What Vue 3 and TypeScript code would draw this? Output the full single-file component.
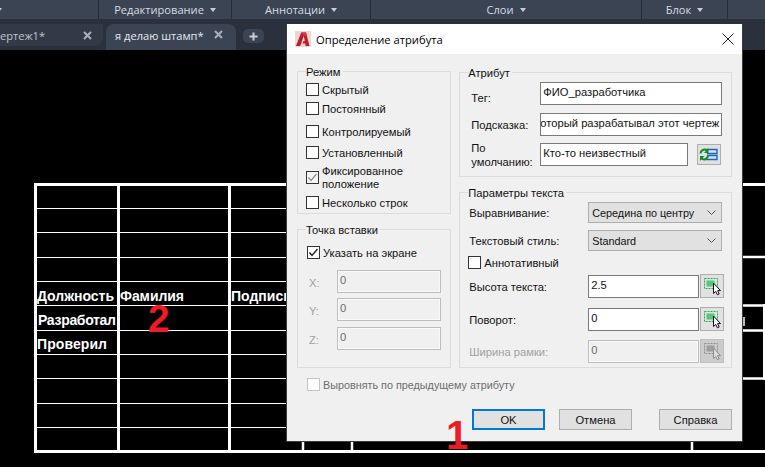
<template>
  <div class="page">
    <div class="ribbon">
      <div v-for="s in sections" :key="s.name" class="section" :style="{ width: s.width + 'px' }">
        <span>{{ s.name }}</span>
        <i v-if="s.name" class="caret"></i>
      </div>
      <div class="section first-caret"><i class="caret"></i></div>
    </div>

    <div class="tabs">
      <div class="tab idle">
        <span class="tab-name">ертеж1*</span>
        <svg class="tab-x" width="9" height="9" viewBox="0 0 9 9"><path d="M1 1l7 7M8 1l-7 7" /></svg>
      </div>
      <div class="tab active">
        <span class="tab-name">я делаю штамп*</span>
        <svg class="tab-x" width="9" height="9" viewBox="0 0 9 9"><path d="M1 1l7 7M8 1l-7 7" /></svg>
      </div>
      <div class="tab plus">
        <svg width="9" height="9" viewBox="0 0 9 9"><path d="M4.5 0.5v8M0.5 4.5h8" /></svg>
      </div>
    </div>

    <div class="canvas">
      <svg class="drawing" width="765" height="417" viewBox="0 50 765 417">
        <g stroke="#fff" fill="none">
          <path v-for="y in thinRows" :key="y" :d="`M34 ${y + 0.5}H742`" stroke-width="1" />
          <path d="M35.5 183V453M118.5 185V452M229.5 185V452" stroke-width="3" />
          <path d="M303 185V452M352 185V452M692 185V452" stroke-width="2.5" />
          <path d="M34 184.5H765M34 451.5H765" stroke-width="3" />
          <path d="M742 257H765M742 305.5H765M742 330.5H765M742 378.5H765" stroke-width="2.5" />
          <path d="M764 304V380" stroke-width="2" />
          <path d="M744 317V326" stroke="#bbb" stroke-width="2" />
        </g>
        <g class="cad-text" fill="#fff">
          <text x="37" y="301" textLength="77">Должность</text>
          <text x="120" y="301" textLength="64">Фамилия</text>
          <text x="231" y="301">Подпись</text>
          <text x="38" y="325" textLength="78">Разработал</text>
          <text x="37" y="349" textLength="70">Проверил</text>
        </g>
      </svg>
      <span class="mark mark-two">2</span>
      <span class="mark mark-one">1</span>

      <div class="dialog">
        <div class="title">
          <svg class="logo" width="16" height="16" viewBox="0 0 16 16">
            <rect width="16" height="16" fill="#f1d5d3" />
            <path d="M1 15 6.2 1.5H11L14.5 15H10.6L10.2 12.6H7.4L8.6 10H9.8L8.8 5 5.2 15Z" fill="#b5202c" />
            <path d="M6.2 1.5H11L11.8 5H8.8Z" fill="#d5333d" />
          </svg>
          <span class="title-text">Определение атрибута</span>
          <svg class="close" width="12" height="12" viewBox="0 0 12 12"><path d="M0.5 0.5l11 11M11.5 0.5l-11 11" /></svg>
        </div>

        <div class="body">
          <div class="columns">
            <div class="col left">
              <div class="group mode">
                <span class="legend">Режим</span>
                <label v-for="m in modes" :key="m.text" class="check" :style="{ marginTop: m.gap + 'px' }">
                  <span class="box" :class="{ muted: m.on }">
                    <svg v-if="m.on" width="11" height="11" viewBox="0 0 11 11"><path d="M1.5 5.5 4 8.5 9.5 2" /></svg>
                  </span>
                  <span class="check-text">{{ m.text }}</span>
                </label>
              </div>

              <div class="group point">
                <span class="legend">Точка вставки</span>
                <label class="check">
                  <span class="box dark">
                    <svg width="11" height="11" viewBox="0 0 11 11"><path d="M1.5 5.5 4 8.5 9.5 2" /></svg>
                  </span>
                  <span class="check-text">Указать на экране</span>
                </label>
                <div v-for="c in coords" :key="c.name" class="coord" :style="{ marginTop: c.gap + 'px' }">
                  <span class="coord-name">{{ c.name }}:</span>
                  <div class="field off coord-field">0</div>
                </div>
              </div>
            </div>

            <div class="col right">
              <div class="group attr">
                <span class="legend">Атрибут</span>
                <div class="attr-row">
                  <span class="attr-label low">Тег:</span>
                  <div class="field wide">ФИО_разработчика</div>
                </div>
                <div class="attr-row gap8">
                  <span class="attr-label">Подсказка:</span>
                  <div class="field wide clipped"><span>который разрабатывал этот чертеж</span></div>
                </div>
                <div class="attr-row gap7">
                  <span class="attr-label two">По<br />умолчанию:</span>
                  <div class="field short">Кто-то неизвестный</div>
                  <button class="tool refresh">
                    <svg width="20" height="15" viewBox="0 0 20 15">
                      <path d="M7 2.5H18V6.5H8M8 8.5H18V12.5H7" fill="none" stroke="#1668c4" stroke-width="1.4" />
                      <path d="M1.5 6.5A4 4 0 0 1 8 3.5M9 8.5A4 4 0 0 1 2.5 11.5" fill="none" stroke="#0c8f22" stroke-width="2" />
                      <path d="M9.5 1V6H5ZM1 14V9H5.5Z" fill="#0c8f22" />
                    </svg>
                  </button>
                </div>
              </div>

              <div class="group text-params">
                <span class="legend">Параметры текста</span>
                <div class="param">
                  <span class="param-label">Выравнивание:</span>
                  <div class="select">
                    <span>Середина по центру</span>
                    <svg width="9" height="5" viewBox="0 0 9 5"><path d="M0.5 0.5 4.5 4.5 8.5 0.5" /></svg>
                  </div>
                </div>
                <div class="param gap7">
                  <span class="param-label">Текстовый стиль:</span>
                  <div class="select">
                    <span>Standard</span>
                    <svg width="9" height="5" viewBox="0 0 9 5"><path d="M0.5 0.5 4.5 4.5 8.5 0.5" /></svg>
                  </div>
                </div>
                <label class="check annot">
                  <span class="box"></span>
                  <span class="check-text">Аннотативный</span>
                </label>
                <div v-for="p in picks" :key="p.label" class="param" :style="{ marginTop: p.gap + 'px' }">
                  <span class="param-label pick-label" :class="{ faded: p.off }">{{ p.label }}</span>
                  <div class="field pick-field" :class="{ off: p.off }">{{ p.value }}</div>
                  <button class="tool pick" :class="{ disabled: p.off }">
                    <svg width="22" height="22" viewBox="0 0 22 22">
                      <rect class="dash" x="3.5" y="3.5" width="13" height="10" />
                      <rect class="fill" x="5.5" y="5.5" width="8" height="6" />
                      <path class="cursor" d="M12.5 8V18.5L14.8 16.4 16.4 19.8 18.2 19 16.6 15.6H19.5Z" />
                    </svg>
                  </button>
                </div>
              </div>
            </div>
          </div>

          <label class="check align">
            <span class="box blank"></span>
            <span class="check-text faded-dark">Выровнять по предыдущему атрибуту</span>
          </label>

          <div class="footer">
            <button class="btn primary">OK</button>
            <button class="btn">Отмена</button>
            <button class="btn help">Справка</button>
          </div>
        </div>
      </div>
    </div>
  </div>
</template>

<script setup lang="ts">
const sections = [
  { name: '', width: 99 },
  { name: 'Редактирование', width: 133 },
  { name: 'Аннотации', width: 139 },
  { name: 'Слои', width: 271 },
  { name: 'Блок', width: 86 },
];

const thinRows = [208, 232, 257, 281, 305, 330, 354, 378, 403, 427];

const modes = [
  { text: 'Скрытый', on: false, gap: 0 },
  { text: 'Постоянный', on: false, gap: 6 },
  { text: 'Контролируемый', on: false, gap: 10 },
  { text: 'Установленный', on: false, gap: 8 },
  { text: 'Фиксированное положение', on: true, gap: 12 },
  { text: 'Несколько строк', on: false, gap: 12 },
];

const coords = [
  { name: 'X', gap: 11 },
  { name: 'Y', gap: 5 },
  { name: 'Z', gap: 6 },
];

const picks = [
  { label: 'Высота текста:', value: '2.5', off: false, gap: 5 },
  { label: 'Поворот:', value: '0', off: false, gap: 9 },
  { label: 'Ширина рамки:', value: '0', off: true, gap: 8 },
];
</script>

<style>
html,
body {
  margin: 0;
  background: #000;
}
</style>

<style scoped>
.page {
  width: 765px;
  height: 467px;
  display: flex;
  flex-direction: column;
  background: #000;
  overflow: hidden;
  font-family: 'Liberation Sans', Arial, sans-serif;
  font-size: 11.2px;
  color: #111;
}

.ribbon {
  height: 19px;
  display: flex;
  background: #3b4453;
  flex: none;
  position: relative;
}

.section {
  height: 19px;
  box-sizing: border-box;
  border-right: 1px solid #262c36;
  display: flex;
  align-items: center;
  justify-content: center;
  gap: 6px;
  font-family: 'Open Sans', sans-serif;
  font-size: 11.1px;
  color: #d6dce4;
}

.first-caret {
  position: absolute;
  left: -4px;
  top: 0;
  border: 0;
}

.caret {
  width: 0;
  height: 0;
  border-left: 3.5px solid transparent;
  border-right: 3.5px solid transparent;
  border-top: 4px solid #c9ced6;
}

.tabs {
  height: 31px;
  flex: none;
  box-sizing: border-box;
  padding-top: 5px;
  background: #2b313c;
  display: flex;
  align-items: flex-start;
  font-family: 'Open Sans', sans-serif;
  font-size: 11.1px;
  color: #d6dce4;
}

.tab {
  display: flex;
  align-items: center;
  box-sizing: border-box;
}

.tab.idle {
  width: 103px;
  height: 22px;
  background: #333a47;
  border-bottom-right-radius: 8px;
  color: #bfc5ce;
}

.tab.active {
  width: 130px;
  height: 26px;
  margin-left: 3px;
  padding: 0 0 4px 9px;
  background: #3b4453;
  border-top-left-radius: 8px;
  border-top-right-radius: 8px;
  color: #e6e9ee;
}

.tab.plus {
  width: 21px;
  height: 14px;
  margin: 5px 0 0 7px;
  justify-content: center;
  background: #3b4453;
  border-radius: 5px;
}

.tab.plus path {
  stroke: #c9ced6;
  stroke-width: 2;
}

.tab-name {
  flex: 1;
  white-space: nowrap;
}

.tab-x {
  margin-right: 11px;
}

.tab.active .tab-x {
  margin-right: 13px;
  margin-top: -1px;
}

.tab-x path {
  stroke: #aab0ba;
  stroke-width: 2;
  fill: none;
}

.canvas {
  flex: 1;
  position: relative;
}

.drawing {
  position: absolute;
  left: 0;
  top: 0;
}

.cad-text {
  font-size: 14px;
  font-weight: 700;
}

.mark {
  position: absolute;
  z-index: 2;
  font-weight: 700;
  line-height: 29px;
  color: #ed1c24;
}

.mark-two {
  left: 148px;
  top: 254px;
  font-size: 39px;
}

.mark-one {
  left: 446px;
  top: 371px;
  font-size: 40px;
}

.dialog {
  position: absolute;
  left: 286px;
  top: -26px;
  width: 457px;
  height: 418px;
  box-sizing: border-box;
  border: 1px solid #3a3a3a;
  border-top: 0;
  background: #f0f0f0;
  display: flex;
  flex-direction: column;
}

.title {
  height: 30px;
  flex: none;
  background: #fff;
  display: flex;
  align-items: center;
  padding-left: 8px;
  font-family: 'Open Sans', sans-serif;
  font-size: 11.2px;
  color: #000;
}

.title-text {
  margin-left: 5px;
  flex: 1;
}

.close {
  margin-right: 8px;
}

.close path {
  stroke: #222;
  stroke-width: 1;
  fill: none;
}

.body {
  flex: 1;
  padding: 17px 10px 0;
}

.columns {
  display: flex;
  gap: 8px;
}

.col {
  display: flex;
  flex-direction: column;
  gap: 15px;
}

.col.left {
  width: 155px;
}

.col.right {
  width: 274px;
  margin-top: 1px;
}

.group {
  position: relative;
  box-sizing: border-box;
  border: 1px solid #dcdcdc;
}

.legend {
  position: absolute;
  top: -7px;
  left: 8px;
  padding: 0 2px 0 0;
  background: #f0f0f0;
  line-height: 15px;
  white-space: nowrap;
}

.mode {
  height: 143px;
  padding: 11px 0 0 8px;
}

.point {
  height: 139px;
  padding: 16px 0 0 9px;
}

.attr {
  height: 105px;
  padding: 9px 0 0 11px;
}

.text-params {
  height: 176px;
  padding: 9px 0 0 8px;
}

.check {
  display: flex;
  align-items: center;
  height: 13px;
}

.box {
  width: 13px;
  height: 13px;
  flex: none;
  box-sizing: border-box;
  border: 1px solid #333;
  background: #fff;
  display: flex;
  align-items: center;
  justify-content: center;
}

.box svg {
  fill: none;
  stroke: #8a8a8a;
  stroke-width: 1.2;
}

.box.muted {
  background: #f4f4f4;
}

.box.dark svg {
  stroke: #222;
  stroke-width: 1.4;
}

.box.blank {
  border-color: #c4c4c4;
}

.check-text {
  margin: 1px 0 0 3px;
  line-height: 13px;
}

.faded-dark {
  color: #6d6d6d;
  font-size: 10.8px;
}

.annot {
  margin-top: 5px;
}

.align {
  margin: 10px 0 0 10px;
}

.coord {
  display: flex;
  align-items: center;
}

.coord-name {
  width: 28px;
  margin: 2px 0 0 2px;
  color: #a0a0a0;
}

.field {
  height: 23px;
  box-sizing: border-box;
  border: 1px solid #7a7a7a;
  background: #fff;
  padding: 2px 2px 0;
  line-height: 14px;
  white-space: nowrap;
  overflow: hidden;
}

.field.off {
  background: #f0f0f0;
  border-color: #bdbdbd;
  color: #6d6d6d;
  box-shadow: inset 0 0 0 1px #fafafa;
}

.coord-field {
  width: 104px;
}

.attr-row {
  display: flex;
  align-items: center;
  height: 23px;
}

.gap8 {
  margin-top: 8px;
}

.gap7 {
  margin-top: 7px;
}

.attr-label {
  width: 69px;
  flex: none;
}

.attr-label.low {
  margin-top: 8px;
}

.attr-label.two {
  line-height: 14px;
}

.wide {
  width: 182px;
}

.short {
  width: 148px;
}

.clipped {
  display: flex;
  justify-content: flex-end;
}

.clipped span {
  flex: none;
}

.tool {
  padding: 0;
  box-sizing: border-box;
  background: #e1e1e1;
  border: 1px solid #adadad;
  display: flex;
  align-items: center;
  justify-content: center;
}

.refresh {
  width: 24px;
  height: 21px;
  margin-left: 9px;
}

.param {
  display: flex;
  align-items: center;
}

.param-label {
  width: 120px;
  flex: none;
  padding-left: 1px;
  box-sizing: border-box;
}

.pick-label {
  margin-top: 2px;
}

.faded {
  color: #a0a0a0;
}

.select {
  width: 134px;
  height: 21px;
  box-sizing: border-box;
  border: 1px solid #adadad;
  background: #e1e1e1;
  display: flex;
  align-items: center;
  justify-content: space-between;
  padding: 0 5px 0 3px;
  font-size: 10.8px;
}

.select path {
  fill: none;
  stroke: #555;
  stroke-width: 1;
}

.pick-field {
  width: 111px;
}

.pick {
  width: 24px;
  height: 24px;
  margin-left: 1px;
}

.dash {
  fill: none;
  stroke: #22b14c;
  stroke-width: 1;
  stroke-dasharray: 2 1;
}

.fill {
  fill: #5ac47d;
}

.cursor {
  fill: #fff;
  stroke: #111;
  stroke-width: 1;
}

.pick.disabled {
  background: #cccccc;
  border-color: #bfbfbf;
}

.pick.disabled .dash {
  stroke: #8f8f8f;
}

.pick.disabled .fill {
  fill: #9e9e9e;
}

.pick.disabled .cursor {
  fill: #dcdcdc;
  stroke: #8f8f8f;
}

.footer {
  display: flex;
  justify-content: flex-end;
  gap: 14px;
  margin-top: 18px;
}

.btn {
  width: 73px;
  height: 21px;
  padding: 0;
  box-sizing: border-box;
  background: #e1e1e1;
  border: 1px solid #adadad;
  font: inherit;
  color: #111;
}

.btn.primary {
  border: 2px solid #0078d7;
}

.btn.help {
  margin-left: 13px;
}
</style>
